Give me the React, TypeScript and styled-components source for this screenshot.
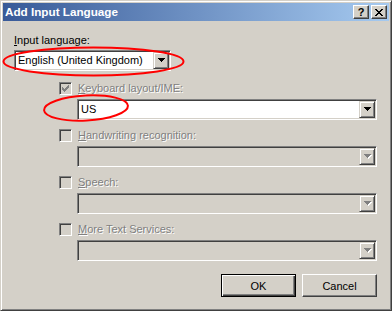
import React from "react";
import styled, { createGlobalStyle } from "styled-components";

const GlobalStyle = createGlobalStyle`
  html, body {
    margin: 0;
    padding: 0;
    background: #d4d0c8;
  }
  body {
    font-family: "Liberation Sans", Arial, sans-serif;
    font-size: 11px;
  }
`;

const CHECK = [
    "......x",
    ".....xx",
    "x...xxx",
    "xx.xxx.",
    "xxxxx..",
    ".xxx...",
    "..x....",
];

const ARROW = [
    [0, 7],
    [1, 5],
    [2, 3],
    [3, 1],
];

const Arrow = ({ disabled }: { disabled?: boolean }) => (
    <svg width="8" height="5" viewBox="0 0 8 5" shapeRendering="crispEdges">
        {disabled &&
            ARROW.map(([y, w]) => (
                <rect key={"s" + y} x={y + 1} y={y + 1} width={w} height={1} fill="#ffffff" />
            ))}
        {ARROW.map(([y, w]) => (
            <rect key={y} x={y} y={y} width={w} height={1} fill={disabled ? "#808080" : "#000000"} />
        ))}
    </svg>
);

const CheckMark = () => (
    <svg width="7" height="7" viewBox="0 0 7 7" shapeRendering="crispEdges">
        {CHECK.flatMap((row, y) =>
            row.split("").map((c, x) =>
                c === "x" ? <rect key={`${x}-${y}`} x={x} y={y} width={1} height={1} fill="#808080" /> : null
            )
        )}
    </svg>
);

export default function App() {
    return (
        <>
            <GlobalStyle />
            <Window>
                <TitleBar>
                    <Title>Add Input Language</Title>
                    <CaptionButtons>
                        <CaptionButton>?</CaptionButton>
                        <CaptionButton>
                            <svg width="8" height="7" viewBox="0 0 8 7" shapeRendering="crispEdges">
                                <path d="M0 0h2v1h-2zM6 0h2v1h-2zM1 1h2v1h-2zM5 1h2v1h-2zM2 2h4v1h-4zM3 3h2v1h-2zM2 4h4v1h-4zM1 5h2v1h-2zM5 5h2v1h-2zM0 6h2v1h-2zM6 6h2v1h-2z" fill="#000" />
                            </svg>
                        </CaptionButton>
                    </CaptionButtons>
                </TitleBar>

                <Body>
                    <FieldLabel><u>I</u>nput language:</FieldLabel>
                    <Combo $width={157} $top={3}>
                        <ComboText>English (United Kingdom)</ComboText>
                        <DropButton><Arrow /></DropButton>
                    </Combo>

                    <OptionList>
                        <Option>
                            <CheckRow>
                                <CheckBox><CheckMark /></CheckBox>
                                <DisabledLabel><u>K</u>eyboard layout/IME:</DisabledLabel>
                            </CheckRow>
                            <Combo $top={4} $indent={18}>
                                <ComboText>US</ComboText>
                                <DropButton><Arrow /></DropButton>
                            </Combo>
                        </Option>
                        <Option>
                            <CheckRow>
                                <CheckBox />
                                <DisabledLabel><u>H</u>andwriting recognition:</DisabledLabel>
                            </CheckRow>
                            <Combo $top={4} $indent={18} $disabled>
                                <ComboText />
                                <DropButton><Arrow disabled /></DropButton>
                            </Combo>
                        </Option>
                        <Option>
                            <CheckRow>
                                <CheckBox />
                                <DisabledLabel><u>S</u>peech:</DisabledLabel>
                            </CheckRow>
                            <Combo $top={4} $indent={18} $disabled>
                                <ComboText />
                                <DropButton><Arrow disabled /></DropButton>
                            </Combo>
                        </Option>
                        <Option>
                            <CheckRow>
                                <CheckBox />
                                <DisabledLabel><u>M</u>ore Text Services:</DisabledLabel>
                            </CheckRow>
                            <Combo $top={4} $indent={18} $disabled>
                                <ComboText />
                                <DropButton><Arrow disabled /></DropButton>
                            </Combo>
                        </Option>
                    </OptionList>

                    <ButtonRow>
                        <PushButton $default>OK</PushButton>
                        <PushButton>Cancel</PushButton>
                    </ButtonRow>
                </Body>

                <Marks width="392" height="311" viewBox="0 0 392 311">
                    <ellipse cx="93.5" cy="61.5" rx="90" ry="14" fill="none" stroke="#ff0000" strokeWidth="2" />
                    <ellipse cx="86" cy="108" rx="42" ry="12.5" fill="none" stroke="#ff0000" strokeWidth="2" transform="rotate(-3 86 108)" />
                </Marks>
            </Window>
        </>
    );
}

const Window = styled.div`
  position: relative;
  box-sizing: border-box;
  width: 392px;
  height: 311px;
  display: flex;
  flex-direction: column;
  padding: 2px;
  background: #d4d0c8;
  border: 1px solid;
  border-color: #d4d0c8 #404040 #404040 #d4d0c8;
  box-shadow: inset 1px 1px #ffffff, inset -1px -1px #808080;
`;

const TitleBar = styled.div`
  height: 18px;
  display: flex;
  align-items: center;
  justify-content: space-between;
  padding: 0 2px;
  background: linear-gradient(90deg, #385a98 0%, #a6caf0 100%);
`;

const Title = styled.span`
  color: #ffffff;
  font-weight: bold;
  font-size: 11.7px;
  line-height: 18px;
  white-space: nowrap;
`;

const CaptionButtons = styled.div`
  display: flex;
  gap: 2px;
`;

const CaptionButton = styled.div`
  box-sizing: border-box;
  width: 16px;
  height: 14px;
  display: flex;
  align-items: center;
  justify-content: center;
  background: #d4d0c8;
  border: 1px solid;
  border-color: #ffffff #404040 #404040 #ffffff;
  box-shadow: inset -1px -1px #808080;
  font-weight: bold;
  font-size: 11px;
  line-height: 12px;
  color: #000;
`;

const Body = styled.div`
  flex: 1;
  display: flex;
  flex-direction: column;
  padding: 13px 12px 11px 11px;
  color: #000;
`;

const FieldLabel = styled.div`
  line-height: 13px;
  height: 13px;
`;

const Combo = styled.div<{ $width?: number; $top?: number; $indent?: number; $disabled?: boolean }>`
  box-sizing: border-box;
  display: flex;
  height: 21px;
  width: ${(p) => (p.$width ? `${p.$width}px` : "auto")};
  margin-top: ${(p) => p.$top ?? 0}px;
  margin-left: ${(p) => p.$indent ?? 0}px;
  padding: 1px;
  background: ${(p) => (p.$disabled ? "#d4d0c8" : "#ffffff")};
  border: 1px solid;
  border-color: #808080 #ffffff #ffffff #808080;
  box-shadow: inset 1px 1px #404040, inset -1px -1px #d4d0c8;
`;

const ComboText = styled.div`
  flex: 1;
  padding-left: 2px;
  line-height: 17px;
  white-space: nowrap;
  overflow: hidden;
`;

const DropButton = styled.div`
  box-sizing: border-box;
  width: 16px;
  height: 17px;
  display: flex;
  align-items: center;
  justify-content: center;
  padding-left: 1px;
  background: #d4d0c8;
  border: 1px solid;
  border-color: #d4d0c8 #404040 #404040 #d4d0c8;
  box-shadow: inset 1px 1px #ffffff, inset -1px -1px #808080;
`;

const OptionList = styled.div`
  display: flex;
  flex-direction: column;
  gap: 9px;
  margin-top: 11px;
  padding-left: 45px;
`;

const Option = styled.div`
  display: flex;
  flex-direction: column;
`;

const CheckRow = styled.div`
  display: flex;
  align-items: center;
  gap: 6px;
  height: 13px;
`;

const CheckBox = styled.div`
  box-sizing: border-box;
  width: 13px;
  height: 13px;
  display: flex;
  align-items: center;
  justify-content: center;
  background: #d4d0c8;
  border: 1px solid;
  border-color: #808080 #ffffff #ffffff #808080;
  box-shadow: inset 1px 1px #404040, inset -1px -1px #d4d0c8;
`;

const DisabledLabel = styled.span`
  color: #808080;
  text-shadow: 1px 1px 0 #ffffff;
  line-height: 13px;
  white-space: nowrap;
`;

const ButtonRow = styled.div`
  display: flex;
  justify-content: flex-end;
  gap: 6px;
  margin-top: 13px;
`;

const PushButton = styled.div<{ $default?: boolean }>`
  box-sizing: border-box;
  width: 75px;
  height: 23px;
  display: flex;
  align-items: center;
  justify-content: center;
  background: #d4d0c8;
  border: 1px solid;
  border-color: ${(p) => (p.$default ? "#000000" : "#ffffff #404040 #404040 #ffffff")};
  box-shadow: ${(p) =>
    p.$default
        ? "inset 1px 1px #ffffff, inset -1px -1px #404040, inset -2px -2px #808080"
        : "inset -1px -1px #808080"};
  font-size: 11px;
  color: #000;
`;

const Marks = styled.svg`
  position: absolute;
  top: -1px;
  left: -1px;
  pointer-events: none;
`;
